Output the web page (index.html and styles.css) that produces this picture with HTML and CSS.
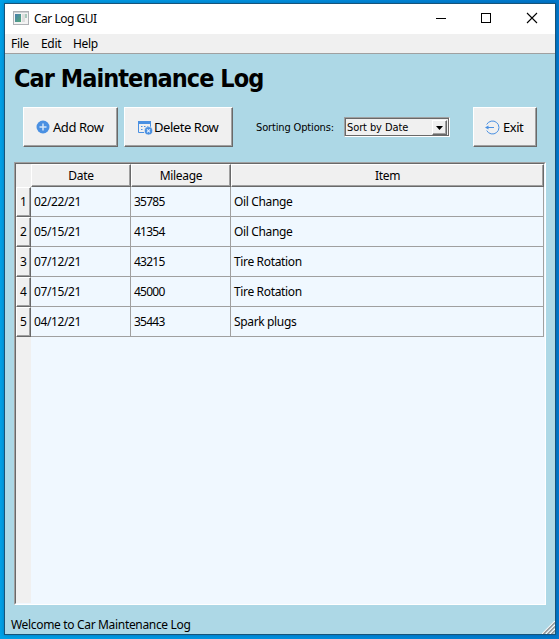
FILE: index.html
```html
<!DOCTYPE html>
<html lang="en">
<head>
<meta charset="utf-8">
<title>Car Log GUI</title>
<link rel="stylesheet" href="styles.css">
</head>
<body>
<div class="window">
  <header class="titlebar">
    <svg class="app-icon" width="16" height="14" viewBox="0 0 16 14">
      <defs><linearGradient id="pane" x1="0" y1="0" x2="1" y2="1"><stop offset="0" stop-color="#497fae"/><stop offset="1" stop-color="#52a878"/></linearGradient></defs>
      <rect x=".5" y=".5" width="15" height="13" fill="#f3f3f3" stroke="#aeb1b5"/>
      <rect x="1" y="1" width="14" height="1" fill="#cfd2d6"/>
      <rect x="2" y="3" width="6" height="8" fill="url(#pane)"/>
      <rect x="9" y="3" width="3" height="8" fill="#dedede"/>
      <rect x="12" y="3" width="2" height="4" fill="#a9c9bd"/>
    </svg>
    <span class="caption">Car Log GUI</span>
    <svg class="controls" width="104" height="12" viewBox="0 0 104 12" fill="none" stroke="#000" shape-rendering="crispEdges">
      <path d="M0 6.500H10"/><rect x="45.500" y="1.500" width="9" height="9"/>
      <path d="M91 1L101 11M101 1L91 11" shape-rendering="auto" stroke-width="1.100"/>
    </svg>
  </header>
  <nav class="menubar"><span class="file">File</span><span class="edit">Edit</span><span class="help">Help</span></nav>
  <main>
    <h1>Car Maintenance Log</h1>
    <div class="toolbar">
      <button class="btn add">
        <svg width="14" height="14" viewBox="0 0 14 14"><circle cx="7" cy="7" r="6.500" fill="#4a90e2"/><path d="M7 3.500V10.500M3.500 7H10.500" stroke="#d4e5f8" stroke-width="1.500"/></svg>
        <span>Add Row</span>
      </button>
      <button class="btn delete">
        <svg width="15" height="14" viewBox="0 0 15 14"><path d="M.5 2.500V11.500H6M12.500 3V6" fill="none" stroke="#4a90e2"/><path d="M0 0H13V3H0Z" fill="#4a90e2"/><path d="M3 5.500h1.500M6 5.500h1.500M9 5.500h1.500M3 8.500h1.500" stroke="#4a90e2" stroke-width="1.200"/><circle cx="10.500" cy="9.800" r="4.100" fill="#4a90e2" stroke="#f0f0f0" stroke-width=".6"/><path d="M9 8.300l3 3m0-3l-3 3" stroke="#e4effc" stroke-width="1.100"/></svg>
        <span>Delete Row</span>
      </button>
      <span class="sort-label">Sorting Options:</span>
      <div class="combo"><span>Sort by Date</span><i class="drop"><svg width="7" height="4" viewBox="0 0 7 4"><path d="M0 0H7L3.500 4Z"/></svg></i></div>
      <button class="btn exit">
        <svg width="15" height="15" viewBox="0 0 15 15" fill="none" stroke="#4a90e2"><path d="M1.700 4.500A6.500 6.500 0 1 1 1.700 10.500M1 7.500H9"/><path d="M0 7.500L3.500 5.500V9.500Z" fill="#4a90e2" stroke="none"/></svg>
        <span>Exit</span>
      </button>
    </div>
    <div class="frame"><div class="view">
      <div class="row head"><b class="corner"></b><b>Date</b><b>Mileage</b><b class="item">Item</b></div>
      <div class="row"><b>1</b><span class="date">02/22/21</span><span class="miles">35785</span><span>Oil Change</span></div>
      <div class="row"><b>2</b><span class="date">05/15/21</span><span class="miles">41354</span><span>Oil Change</span></div>
      <div class="row"><b>3</b><span class="date">07/12/21</span><span class="miles">43215</span><span>Tire Rotation</span></div>
      <div class="row"><b>4</b><span class="date">07/15/21</span><span class="miles">45000</span><span>Tire Rotation</span></div>
      <div class="row"><b>5</b><span class="date">04/12/21</span><span class="miles">35443</span><span>Spark plugs</span></div>
    </div></div>
  </main>
  <footer><span>Welcome to Car Maintenance Log</span>
    <svg width="13" height="13" viewBox="0 0 13 13"><path d="M0 13L13 0M4 13L13 4M8 13L13 8" stroke="#fff" stroke-width="1.200"/><path d="M1.500 13L13 1.500M5.500 13L13 5.500M9.500 13L13 9.500" stroke="#999" stroke-width="1.500"/></svg>
  </footer>
</div>
</body>
</html>
```
FILE: styles.css
```css
* { box-sizing: border-box; }
body {
  margin: 0;
  width: 559px;
  height: 639px;
  padding: 3px 3px 4px 4px;
  overflow: hidden;
  background: linear-gradient(90deg, #00a2e8, #0090df 50%, #0078cc);
  font: 12px/16px "Noto Sans", sans-serif;
  color: #000;
}
.window {
  width: 552px;
  height: 632px;
  border: 1px solid #17547a;
  background: #add8e6;
  display: flex;
  flex-direction: column;
  box-shadow: 0 0 4px rgba(0, 50, 100, .35);
}
span { white-space: nowrap; }
.titlebar {
  height: 30px;
  background: #fff;
  display: flex;
  align-items: center;
  padding-left: 8px;
}
.app-icon { margin-bottom: 2px; }
.caption { margin-left: 5px; letter-spacing: -.5px; }
.controls { margin-left: auto; margin-right: 15px; margin-bottom: 2px; }
.menubar {
  height: 20px;
  background: #f0f0f0;
  border-bottom: 1px solid #a0a0a0;
  display: flex;
  padding: 2px 0 0 6px;
  letter-spacing: -.3px;
}
.file { width: 30px; }
.edit { width: 32px; }
main { height: 551px; padding: 0 9px; }
h1 {
  margin: 0;
  height: 53px;
  padding-top: 9px;
  font: bold 25px/31px "DejaVu Sans Condensed", "DejaVu Sans", sans-serif;
  letter-spacing: -.95px;
  white-space: nowrap;
}
.toolbar {
  height: 40px;
  display: flex;
  padding-left: 9px;
  font: 12px/16px "DejaVu Sans Condensed", "DejaVu Sans", sans-serif;
}
.btn {
  height: 40px;
  padding: 0 0 0 12px;
  display: flex;
  align-items: center;
  background: #f0f0f0;
  border: 1px solid;
  border-color: #fff #696969 #696969 #fff;
  box-shadow: inset -1px -1px #a0a0a0;
  font: 13px/16px "Noto Sans", sans-serif;
  letter-spacing: -.45px;
  color: #000;
}
.btn span { margin-left: 3px; }
.add { width: 95px; }
.delete { width: 109px; margin-left: 6px; padding-left: 13px; }
.delete svg { margin-top: 2px; }
.delete span { margin-left: 1px; }
.exit { width: 64px; margin-left: 23px; padding-left: 11px; }
.sort-label { margin: 13px 0 0 23px; width: 88px; font-size: 11px; letter-spacing: -.15px; }
.combo {
  width: 106px;
  height: 20px;
  margin-top: 10px;
  border: 1px solid;
  border-color: #a0a0a0 #fff #fff #a0a0a0;
  box-shadow: inset 1px 1px #696969, inset -1px -1px #696969;
  background: #f0f0f0;
  display: flex;
  font-size: 11px;
}
.combo span { margin: 2px 0 0 2px; letter-spacing: -.1px; }
.drop {
  margin: 2px 2px 0 auto;
  width: 15px;
  height: 15px;
  border: 1px solid;
  border-color: #fff #696969 #696969 #fff;
  box-shadow: inset -1px -1px #a0a0a0;
  display: flex;
  align-items: center;
  justify-content: center;
}
.frame {
  margin-top: 15px;
  width: 532px;
  height: 443px;
  border: 1px solid;
  border-color: #a0a0a0 #fff #fff #a0a0a0;
}
.view {
  height: 441px;
  border: 1px solid;
  border-color: #696969 #f0f8ff #f0f8ff #696969;
  background: linear-gradient(90deg, #f0f0f0 15px, #f0f8ff 15px);
}
.row { display: grid; grid-template-columns: 15px 100px 100px 313px; height: 30px; }
.row.head { height: 23px; }
.row span { border: solid #a0a0a0; border-width: 0 1px 1px 0; padding: 7px 0 0 3px; letter-spacing: -.35px; }
.row .date { letter-spacing: -.4px; }
.row .miles { letter-spacing: -.75px; }
.row b {
  font-weight: normal;
  text-align: center;
  background: #f0f0f0;
  border: 1px solid;
  border-color: #fff #696969 #696969 #fff;
  box-shadow: inset -1px -1px #a0a0a0;
  padding-top: 6px;
}
.row.head b { padding-top: 3px; letter-spacing: -.3px; }
.row.head .corner { border: 0; box-shadow: none; }
footer { height: 29px; display: flex; justify-content: space-between; padding-left: 6px; }
footer span { padding-top: 12px; letter-spacing: -.33px; }
footer svg { align-self: flex-end; }
```
